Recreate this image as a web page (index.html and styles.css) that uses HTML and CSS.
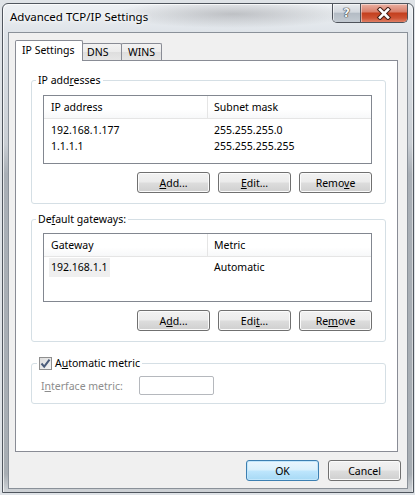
FILE: index.html
```html
<!DOCTYPE html>
<html>
<head>
<meta charset="utf-8">
<title>Advanced TCP/IP Settings</title>
<link rel="stylesheet" href="styles.css">
</head>
<body>
<div class="window">
  <div class="titlebar">
    <div class="title">Advanced TCP/IP Settings</div>
    <div class="caption-buttons">
      <div class="cap help">?</div>
      <div class="cap close">
        <svg width="16" height="13" viewBox="0 0 16 13">
          <path d="M4 2.5 L12 10.5 M12 2.5 L4 10.5" stroke="#4a2218" stroke-width="4.6" stroke-linecap="square" fill="none"/>
          <path d="M4 2.5 L12 10.5 M12 2.5 L4 10.5" stroke="#ffffff" stroke-width="2.6" stroke-linecap="square" fill="none"/>
        </svg>
      </div>
    </div>
  </div>
  <div class="client">
    <div class="tabs">
      <div class="tab active">IP Settings</div>
      <div class="tab dns">DNS</div>
      <div class="tab wins">WINS</div>
    </div>
    <div class="panel">
      <fieldset class="group g-ip">
        <legend>IP add<u>r</u>esses</legend>
        <div class="group-body">
          <div class="list">
            <div class="list-head">
              <div class="col c1">IP address</div>
              <div class="col c2">Subnet mask</div>
            </div>
            <div class="list-body">
              <div class="row"><div class="cell c1">192.168.1.177</div><div class="cell c2">255.255.255.0</div></div>
              <div class="row"><div class="cell c1">1.1.1.1</div><div class="cell c2">255.255.255.255</div></div>
            </div>
          </div>
          <div class="btn-row">
            <button class="btn"><u>A</u>dd...</button>
            <button class="btn"><u>E</u>dit...</button>
            <button class="btn">Remo<u>v</u>e</button>
          </div>
        </div>
      </fieldset>

      <fieldset class="group g-gw">
        <legend>De<u>f</u>ault gateways:</legend>
        <div class="group-body">
          <div class="list">
            <div class="list-head">
              <div class="col c1">Gateway</div>
              <div class="col c2">Metric</div>
            </div>
            <div class="list-body">
              <div class="row sel-row"><div class="cell c1"><span class="sel">192.168.1.1</span></div><div class="cell c2">Automatic</div></div>
            </div>
          </div>
          <div class="btn-row">
            <button class="btn">A<u>d</u>d...</button>
            <button class="btn">Edi<u>t</u>...</button>
            <button class="btn">Re<u>m</u>ove</button>
          </div>
        </div>
      </fieldset>

      <fieldset class="group g-metric">
        <legend>
          <span class="checkbox">
            <svg width="13" height="13" viewBox="0 0 13 13">
              <path d="M2.5 6.5 L5.2 9.6 L10.5 2.6" stroke="#4b5c7a" stroke-width="2" fill="none" stroke-linejoin="miter"/>
            </svg>
          </span>
          <span>A<u>u</u>tomatic metric</span>
        </legend>
        <div class="group-body metric-row">
          <span class="disabled-label">I<u>n</u>terface metric:</span>
          <span class="textbox"></span>
        </div>
      </fieldset>
    </div>
    <div class="footer">
      <button class="btn default">OK</button>
      <button class="btn">Cancel</button>
    </div>
  </div>
</div>
</body>
</html>
```

FILE: styles.css
```css
html, body {
  margin: 0;
  padding: 0;
}
body {
  width: 415px;
  height: 495px;
  overflow: hidden;
  background: #dfe3e7;
  font-family: "Noto Sans", "Open Sans", "DejaVu Sans", sans-serif;
  font-size: 10.5px;
  color: #000;
}
u { text-decoration: underline; text-underline-offset: 1px; }

.window {
  box-sizing: border-box;
  width: 412px;
  height: 490px;
  margin: 3px 1px 2px 2px;
  border: 1px solid #50565e;
  border-radius: 6px 6px 0 0;
  background:
    radial-gradient(ellipse 120px 14px at 230px 10px, rgba(110,110,115,0.35), rgba(110,110,115,0) 100%),
    linear-gradient(180deg, #eef1f4 0px, #dfe4e9 28px, #c9ced4 140px, #a9afb6 170px, #a7adb3 470px, #cdd1d5 486px);
  display: flex;
  flex-direction: column;
  box-shadow: inset 1px 1px 0 rgba(255,255,255,0.7), inset -1px 0 0 rgba(255,255,255,0.5);
}

.titlebar {
  height: 28px;
  display: flex;
  justify-content: space-between;
  align-items: flex-start;
  flex: none;
}
.title {
  padding: 5px 0 0 7px;
  font-size: 11.5px;
  line-height: 16px;
  color: #000;
  text-shadow: 0 0 6px #fff, 0 0 4px #fff;
}
.caption-buttons {
  display: flex;
  margin-right: 5px;
  border: 1px solid #4e535b;
  border-top: none;
  border-radius: 0 0 5px 5px;
  overflow: hidden;
  height: 18px;
}
.cap {
  display: flex;
  align-items: center;
  justify-content: center;
  height: 18px;
}
.help {
  width: 27px;
  border-right: 1px solid #4e535b;
  background: linear-gradient(180deg, #e8ebee 0%, #d3d8de 45%, #b4bcc5 52%, #c3cad2 100%);
  color: #f4f6f8;
  font-family: "DejaVu Sans", sans-serif;
  font-weight: bold;
  font-size: 12px;
  text-shadow: 0 0 1px #333, 0 0 1px #333, 0 0 1px #333;
  box-shadow: inset 1px 1px 0 rgba(255,255,255,0.6);
}
.close {
  width: 46px;
  background: linear-gradient(180deg, #eab1a3 0%, #d9806c 42%, #c4401f 52%, #cd5233 78%, #e08066 100%);
  box-shadow: inset 1px 1px 0 rgba(255,255,255,0.45);
}
.close svg { display: block; }

.client {
  box-sizing: border-box;
  height: 457px;
  margin: 0 5px 0 5px;
  border: 1px solid #8a9199;
  background: #f0f0f0;
  display: flex;
  flex-direction: column;
  flex: none;
}

.tabs {
  display: flex;
  align-items: flex-end;
  padding: 7px 0 0 6px;
  height: 20px;
  flex: none;
}
.tab {
  box-sizing: border-box;
  height: 17px;
  border: 1px solid #898c95;
  border-bottom: none;
  border-radius: 2px 2px 0 0;
  background: linear-gradient(180deg, #f3f3f3 0%, #ebebeb 50%, #dedede 51%, #e6e6e6 100%);
  line-height: 15px;
  padding-top: 1px;
  font-size: 10.5px;
}
.tab.active {
  position: relative;
  z-index: 2;
  height: 21px;
  width: 68px;
  margin-bottom: -1px;
  background: #fff;
  padding: 0 0 0 6px;
  line-height: 19px;
}
.tab.dns {
  width: 40px;
  margin-left: -1px;
  padding-left: 4px;
}
.tab.wins {
  width: 41px;
  margin-left: -1px;
  padding-left: 6px;
}

.panel {
  box-sizing: border-box;
  height: 392px;
  margin: 0 9px 0 6px;
  border: 1px solid #898c95;
  background: #fff;
  padding: 11px 11px 0 15px;
  flex: none;
}

.group {
  margin: 0;
  padding: 0;
  border: 1px solid #d5dfe5;
  border-radius: 3px;
  min-width: 0;
}
.group legend {
  margin-left: 4px;
  padding: 0 2px;
  line-height: 16px;
  height: 16px;
}
.group-body {
  padding: 0 13px 10px 11px;
}
.g-gw { margin-top: 7px; }
.g-metric { margin-top: 13px; }
.g-metric .group-body { padding-bottom: 8px; }
.g-metric legend {
  margin-left: 5px;
  display: flex;
  align-items: center;
  gap: 3px;
}

.list {
  box-sizing: border-box;
  height: 69px;
  margin-top: 7px;
  border: 1px solid #828790;
  background: #fff;
}
.g-gw .list { margin-top: 6px; }
.list-head {
  display: flex;
  height: 23px;
  box-sizing: border-box;
  border-bottom: 1px solid #e5e5e5;
  background: linear-gradient(180deg, #ffffff 0%, #ffffff 60%, #f7f8f9 100%);
}
.col {
  line-height: 22px;
}
.c1 {
  box-sizing: border-box;
  width: 164px;
  padding-left: 7px;
  flex: none;
}
.list-head .c1 { border-right: 1px solid #e5e5e5; }
.c2 {
  padding-left: 6px;
}
.list-body {
  padding-top: 3px;
}
.row {
  display: flex;
  height: 16px;
  line-height: 16px;
}
.sel-row {
  height: 19px;
  line-height: 19px;
  margin-top: -2px;
}
.sel {
  display: inline-block;
  margin-left: -2px;
  padding: 0 2px;
  background: #efefef;
}

.btn-row {
  display: flex;
  justify-content: flex-end;
  gap: 8px;
  margin-top: 8px;
}
.btn {
  box-sizing: border-box;
  width: 73px;
  height: 21px;
  padding: 0;
  border: 1px solid #707070;
  border-radius: 3px;
  background: linear-gradient(180deg, #f2f2f2 0%, #ebebeb 48%, #dddddd 52%, #cfcfcf 100%);
  box-shadow: inset 0 0 0 1px #fbfbfb;
  font-family: inherit;
  font-size: 10.5px;
  color: #000;
  line-height: 18px;
}
.btn.default {
  border-color: #3c7fb1;
  background: linear-gradient(180deg, #eaf6fd 0%, #d9f0fc 48%, #bee6fd 52%, #a7d9f5 100%);
  box-shadow: inset 0 0 0 1px #c2e6fb;
}

.checkbox {
  box-sizing: border-box;
  width: 13px;
  height: 13px;
  border: 1px solid #8f8f8f;
  background: linear-gradient(135deg, #dcdcdc 0%, #f4f4f4 100%);
  display: inline-flex;
  align-items: center;
  justify-content: center;
  flex: none;
}
.checkbox svg { display: block; margin: -1px; }

.metric-row {
  display: flex;
  align-items: center;
  padding-top: 5px;
  padding-left: 9px;
}
.disabled-label {
  color: #8d8d8d;
  width: 98px;
}
.textbox {
  box-sizing: border-box;
  width: 75px;
  height: 19px;
  border: 1px solid #b5b8bd;
  border-radius: 2px;
  background: #fff;
}

.footer {
  display: flex;
  justify-content: flex-end;
  gap: 9px;
  margin-top: 8px;
  padding-right: 6px;
}
```
